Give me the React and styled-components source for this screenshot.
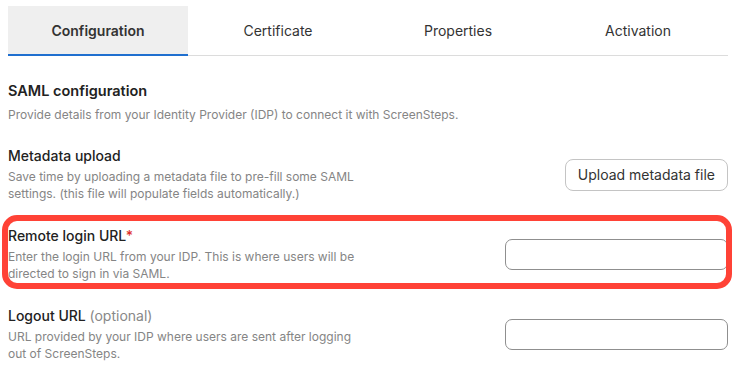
import React from "react";
import styled, { createGlobalStyle } from "styled-components";

const GlobalStyle = createGlobalStyle`
  body {
    margin: 0;
    background: #fff;
    font-family: Inter, "Noto Sans", sans-serif;
    color: #222;
  }
`;

const Page = styled.div`
  width: 720px;
  padding: 6px 10px 0 8px;
`;

const TabBar = styled.div`
  display: grid;
  grid-template-columns: repeat(4, 1fr);
  border-bottom: 1px solid #dcdcdc;
`;

const Tab = styled.div`
  height: 48px;
  display: flex;
  align-items: center;
  justify-content: center;
  font-size: 14px;
  font-weight: ${(p) => (p.$active ? 600 : 400)};
  color: #333;
  background: ${(p) => (p.$active ? "#efefef" : "transparent")};
  border-bottom: 2px solid ${(p) => (p.$active ? "#1f6fcf" : "transparent")};
  margin-bottom: -1px;
`;

const Intro = styled.div`
  padding-top: 26px;
  margin-bottom: 24px;
`;

const Heading = styled.h2`
  margin: 0 0 7px;
  font-size: 14.5px;
  font-weight: 600;
  color: #222;
`;

const Rows = styled.div`
  display: flex;
  flex-direction: column;
  gap: 25px;
`;

const Row = styled.div`
  position: relative;
  display: flex;
  align-items: center;
  justify-content: space-between;
`;

const Info = styled.div`
  width: 350px;
`;

const Label = styled.div`
  font-size: 14px;
  font-weight: 500;
  color: #222;
  margin-bottom: 4px;
`;

const Optional = styled.span`
  font-weight: 400;
  color: #888;
`;

const Required = styled.span`
  color: #e0312b;
`;

const Help = styled.p`
  margin: 0;
  font-size: 12px;
  line-height: 17px;
  color: #858585;
`;

const Button = styled.button`
  height: 32px;
  padding: 0 12px;
  border: 1px solid #c4c4c4;
  border-radius: 8px;
  background: #fff;
  font-family: Inter, "Noto Sans", sans-serif;
  font-size: 14px;
  color: #333;
`;

const Input = styled.input`
  width: 223px;
  height: 31px;
  box-sizing: border-box;
  border: 1px solid #8f8f8f;
  border-radius: 7px;
  background: #fff;
  outline: none;
`;

const Highlight = styled.div`
  position: absolute;
  left: -6px;
  right: -4px;
  top: -12px;
  bottom: -7px;
  border: 6px solid #ff4236;
  border-radius: 15px;
  pointer-events: none;
`;

const tabs = ["Configuration", "Certificate", "Properties", "Activation"];

export default function App() {
  return (
    <>
      <GlobalStyle />
      <Page>
        <TabBar>
          {tabs.map((t, i) => (
            <Tab key={t} $active={i === 0}>
              {t}
            </Tab>
          ))}
        </TabBar>

        <Intro>
          <Heading>SAML configuration</Heading>
          <Help>
            Provide details from your Identity Provider (IDP) to connect it with
            ScreenSteps.
          </Help>
        </Intro>

        <Rows>
          <Row>
            <Info>
              <Label>Metadata upload</Label>
              <Help>
                Save time by uploading a metadata file to pre-fill some SAML
                settings. (this file will populate fields automatically.)
              </Help>
            </Info>
            <Button>Upload metadata file</Button>
          </Row>

          <Row>
            <Info>
              <Label>
                Remote login URL<Required>*</Required>
              </Label>
              <Help>
                Enter the login URL from your IDP. This is where users will be
                directed to sign in via SAML.
              </Help>
            </Info>
            <Input />
            <Highlight />
          </Row>

          <Row>
            <Info>
              <Label>
                Logout URL <Optional>(optional)</Optional>
              </Label>
              <Help>
                URL provided by your IDP where users are sent after logging out
                of ScreenSteps.
              </Help>
            </Info>
            <Input />
          </Row>
        </Rows>
      </Page>
    </>
  );
}
